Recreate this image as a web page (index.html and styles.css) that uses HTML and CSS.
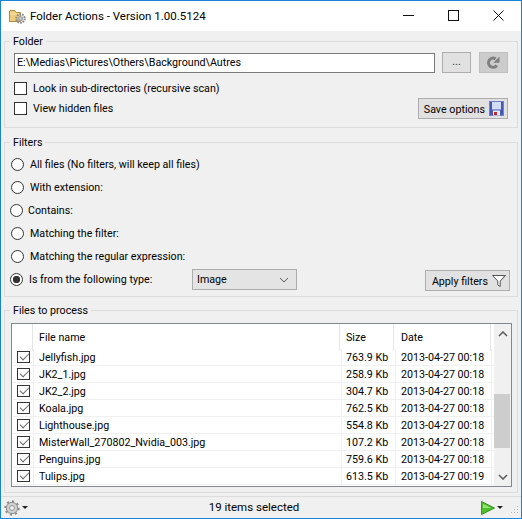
FILE: index.html
```html
<!DOCTYPE html>
<html lang="en">
<head>
    <meta charset="UTF-8">
    <meta name="viewport" content="width=device-width, initial-scale=1.0">
    <title>Folder Actions</title>
    <link rel="stylesheet" href="styles.css">
</head>
<body>
    <div class="window">
        <div class="titlebar">
            <svg class="app-icon" width="17" height="16" viewBox="0 0 17 16">
                <path d="M0.5 3V13.5h11V4.5H7L5.5 2.5H1z" fill="#f0cd7c" stroke="#b08a3c"/>
                <path d="M1.5 6h10" stroke="#fbe9b8"/>
                <circle cx="11.5" cy="10.5" r="4.2" fill="none" stroke="#8a8a8a" stroke-width="2.2" stroke-dasharray="1.6 1"/>
                <circle cx="11.5" cy="10.5" r="2.6" fill="#a5a5a5"/>
                <circle cx="11.5" cy="10.5" r="1" fill="#e0e0e0"/>
            </svg>
            <span class="title">Folder Actions - Version 1.00.5124</span>
            <div class="caption-buttons">
                <svg width="11" height="11" viewBox="0 0 11 11"><path d="M0 5.5h11" stroke="#111"/></svg>
                <svg width="11" height="11" viewBox="0 0 11 11"><rect x="0.5" y="0.5" width="10" height="10" fill="none" stroke="#111"/></svg>
                <svg width="11" height="11" viewBox="0 0 11 11"><path d="M0.5 0.5l10 10M10.5 0.5l-10 10" stroke="#111" fill="none"/></svg>
            </div>
        </div>

        <div class="content">
            <fieldset class="group group-folder">
                <legend>Folder</legend>
                <div class="path-row">
                    <div class="textbox">E:\Medias\Pictures\Others\Background\Autres</div>
                    <button class="btn btn-browse">...</button>
                    <button class="btn btn-refresh" disabled>
                        <svg width="15" height="15" viewBox="0 0 15 15">
                            <path d="M10.8 10.4A4.6 4.6 0 1 1 9.6 3.9" fill="none" stroke="#808080" stroke-width="3"/>
                            <path d="M13.5 1.5v6.2h-6.2z" fill="#808080"/>
                        </svg>
                    </button>
                </div>
                <div class="options-row">
                    <div class="options-checks">
                        <label class="check"><span class="box"></span>Look in sub-directories (recursive scan)</label>
                        <label class="check"><span class="box"></span>View hidden files</label>
                    </div>
                    <button class="btn btn-save"><span class="btn-label">Save options</span>
                        <svg width="15" height="15" viewBox="0 0 15 15">
                            <rect x="0.5" y="0.5" width="14" height="14" fill="#4658b8" stroke="#6f7fd0"/>
                            <rect x="3" y="1" width="9" height="7.5" fill="#d3dcf5"/>
                            <rect x="4" y="9.5" width="7" height="5" fill="#eceef4"/>
                            <rect x="5" y="11" width="3" height="3" fill="#c8242c"/>
                        </svg>
                    </button>
                </div>
            </fieldset>

            <fieldset class="group group-filters">
                <legend>Filters</legend>
                <div class="radio-list">
                    <label class="radio"><span class="dot"></span>All files (No filters, will keep all files)</label>
                    <label class="radio"><span class="dot"></span>With extension:</label>
                    <label class="radio radio-tight"><span class="dot"></span>Contains:</label>
                    <label class="radio"><span class="dot"></span>Matching the filter:</label>
                    <label class="radio"><span class="dot"></span>Matching the regular expression:</label>
                    <div class="type-row">
                        <label class="radio radio-type"><span class="dot checked"></span>Is from the following type:</label>
                        <div class="combo">Image
                            <svg width="10" height="6" viewBox="0 0 10 6"><path d="M1 1l4 4 4-4" fill="none" stroke="#555"/></svg>
                        </div>
                        <button class="btn btn-apply"><span class="btn-label">Apply filters</span>
                            <svg width="14" height="12" viewBox="0 0 14 12">
                                <path d="M0.5 0.5h13L8.2 6v5.5L5.8 10V6z" fill="#fff" stroke="#555"/>
                                <path d="M8.2 6l3.6-5h1.7L8.2 6.5z" fill="#777"/>
                            </svg>
                        </button>
                    </div>
                </div>
            </fieldset>

            <fieldset class="group group-files">
                <legend>Files to process</legend>
                <div class="listview">
                    <div class="list-main">
                        <div class="list-head">
                            <span class="cell-check"></span>
                            <span class="cell-name">File name</span>
                            <span class="cell-size">Size</span>
                            <span class="cell-date">Date</span>
                        </div>
                        <div class="list-row"><span class="cell-check"><span class="tick"></span></span><span class="cell-name">Jellyfish.jpg</span><span class="cell-size">763.9 Kb</span><span class="cell-date">2013-04-27 00:18</span></div>
                        <div class="list-row"><span class="cell-check"><span class="tick"></span></span><span class="cell-name">JK2_1.jpg</span><span class="cell-size">258.9 Kb</span><span class="cell-date">2013-04-27 00:18</span></div>
                        <div class="list-row"><span class="cell-check"><span class="tick"></span></span><span class="cell-name">JK2_2.jpg</span><span class="cell-size">304.7 Kb</span><span class="cell-date">2013-04-27 00:18</span></div>
                        <div class="list-row"><span class="cell-check"><span class="tick"></span></span><span class="cell-name">Koala.jpg</span><span class="cell-size">762.5 Kb</span><span class="cell-date">2013-04-27 00:18</span></div>
                        <div class="list-row"><span class="cell-check"><span class="tick"></span></span><span class="cell-name">Lighthouse.jpg</span><span class="cell-size">554.8 Kb</span><span class="cell-date">2013-04-27 00:18</span></div>
                        <div class="list-row"><span class="cell-check"><span class="tick"></span></span><span class="cell-name">MisterWall_270802_Nvidia_003.jpg</span><span class="cell-size">107.2 Kb</span><span class="cell-date">2013-04-27 00:18</span></div>
                        <div class="list-row"><span class="cell-check"><span class="tick"></span></span><span class="cell-name">Penguins.jpg</span><span class="cell-size">759.6 Kb</span><span class="cell-date">2013-04-27 00:18</span></div>
                        <div class="list-row"><span class="cell-check"><span class="tick"></span></span><span class="cell-name">Tulips.jpg</span><span class="cell-size">613.5 Kb</span><span class="cell-date">2013-04-27 00:19</span></div>
                    </div>
                    <div class="scrollbar">
                        <svg width="10" height="6" viewBox="0 0 10 6"><path d="M1 5l4-4 4 4" fill="none" stroke="#606060" stroke-width="1.6"/></svg>
                        <div class="scroll-track"><div class="scroll-thumb"></div></div>
                        <svg width="10" height="6" viewBox="0 0 10 6"><path d="M1 1l4 4 4-4" fill="none" stroke="#606060" stroke-width="1.6"/></svg>
                    </div>
                </div>
            </fieldset>
        </div>

        <div class="statusbar">
            <div class="status-left">
                <svg width="16" height="16" viewBox="0 0 17 17">
                    <circle cx="8.5" cy="8.5" r="6" fill="#d2d2d2" stroke="#858585" stroke-width="1"/>
                    <circle cx="8.5" cy="8.5" r="7.2" fill="none" stroke="#8e8e8e" stroke-width="2" stroke-dasharray="2.4 3.2"/>
                    <circle cx="8.5" cy="8.5" r="2.6" fill="#f0f0f0" stroke="#8e8e8e"/>
                </svg>
                <span class="caret"></span>
            </div>
            <span class="status-text">19 items selected</span>
            <div class="status-right">
                <svg class="play" width="14" height="14" viewBox="0 0 14 14">
                    <path d="M0.5 0.5L13.5 7 0.5 13.5z" fill="#4fbf2a" stroke="#3a8f28"/>
                    <path d="M2 3L10 7H2z" fill="#9ae27a"/>
                </svg>
                <span class="caret"></span>
                <svg class="grip" width="9" height="9" viewBox="0 0 9 9">
                    <path d="M7 1h1v1H7zM4 4h1v1H4zM7 4h1v1H7zM1 7h1v1H1zM4 7h1v1H4zM7 7h1v1H7z" fill="#b5b5b5"/>
                </svg>
            </div>
        </div>
    </div>
</body>
</html>
```

FILE: styles.css
```css
* {
    box-sizing: border-box;
}
body {
    margin: 0;
    font-family: Roboto, "Noto Sans", sans-serif;
    font-size: 10.7px;
    color: #000;
    background-color: #f0f0f0;
}
.window {
    width: 522px;
    height: 519px;
    display: flex;
    flex-direction: column;
    border: 1px solid #1883d7;
    background-color: #f0f0f0;
    overflow: hidden;
}

/* title bar */
.titlebar {
    height: 30px;
    flex: none;
    display: flex;
    align-items: center;
    background-color: #fff;
    padding-left: 8px;
}
.app-icon {
    margin-right: 4px;
}
.title {
    font-size: 11.5px;
}
.caption-buttons {
    margin-left: auto;
    margin-bottom: 1px;
    display: flex;
    gap: 34px;
    padding-right: 17px;
}

/* groups */
.content {
    flex: 1;
    padding: 2px 3px 0;
}
.group {
    margin: 0;
    padding: 0 9px;
    border: 1px solid #dcdcdc;
    min-width: 0;
}
.group legend {
    margin-left: -4px;
    padding: 0 3px;
    line-height: 18px;
    height: 16px;
}
.group-folder {
    height: 95px;
}
.group-filters {
    height: 163px;
    margin-top: 6px;
}
.group-files {
    height: 191px;
    margin-top: 5px;
    padding: 0 5px 0 6px;
}
.group-files legend {
    margin-left: -1px;
}

.btn {
    height: 21px;
    padding: 0;
    font: inherit;
    color: #000;
    background-color: #e1e1e1;
    border: 1px solid #adadad;
    display: inline-flex;
    align-items: center;
    justify-content: center;
}
.btn-label {
    padding-top: 2px;
}

/* folder */
.path-row {
    display: flex;
    align-items: center;
    margin-top: 3px;
}
.textbox {
    width: 421px;
    height: 20px;
    line-height: 18px;
    padding-left: 2px;
    background-color: #fff;
    border: 1px solid #7a7a7a;
}
.btn-browse {
    width: 29px;
    margin-left: 7px;
    color: #333;
    padding-bottom: 3px;
}
.btn-refresh {
    width: 29px;
    margin-left: 8px;
    background-color: #cccccc;
    border-color: #bfbfbf;
}
.options-row {
    display: flex;
    justify-content: space-between;
    align-items: flex-start;
    padding-top: 8px;
}
.options-checks {
    display: flex;
    flex-direction: column;
    gap: 7px;
    padding-top: 1px;
}
.check {
    display: flex;
    align-items: center;
    height: 13px;
}
.box {
    width: 13px;
    height: 13px;
    margin-right: 6px;
    background-color: #fff;
    border: 1px solid #333;
}
.btn-save {
    width: 90px;
    margin-top: 17px;
    gap: 4px;
    justify-content: flex-end;
    padding-right: 3px;
}

/* filters */
.radio-list {
    display: flex;
    flex-direction: column;
    padding-top: 3px;
}
.radio {
    display: flex;
    align-items: center;
    height: 23px;
    margin-left: -3px;
}
.radio-tight {
    margin-left: -4px;
}
.radio-tight .dot {
    margin-right: 5px;
}
.dot {
    width: 13px;
    height: 13px;
    margin-right: 6px;
    border: 1px solid #333;
    border-radius: 50%;
    background-color: #fff;
}
.dot.checked {
    background: radial-gradient(circle, #333 0, #333 3.4px, #fff 4px);
}
.type-row {
    display: flex;
    align-items: center;
}
.type-row > * {
    flex: none;
}
.radio-type {
    margin-left: -4px;
    width: 182px;
}
.combo {
    width: 105px;
    height: 21px;
    padding: 0 7px 0 4px;
    display: flex;
    align-items: center;
    justify-content: space-between;
    background-color: #e4e4e4;
    border: 1px solid #adadad;
}
.btn-apply {
    width: 85px;
    margin-left: 128px;
    margin-top: 2px;
    gap: 4px;
    justify-content: flex-end;
    padding-right: 3px;
}

/* file list */
.listview {
    display: flex;
    height: 164px;
    margin-top: 5px;
    background-color: #fff;
    border: 1px solid #828790;
}
.list-main {
    flex: 1;
    min-width: 0;
    padding-left: 1px;
}
.list-head,
.list-row {
    display: grid;
    align-items: stretch;
}
.list-head {
    grid-template-columns: 20px 307px 54px 97px;
    height: 25px;
    line-height: 27px;
}
.list-head > span {
    border-right: 1px solid #e5e5e5;
}
.list-head .cell-name {
    padding-left: 6px;
}
.list-head .cell-size {
    padding-left: 6px;
}
.list-head .cell-date {
    padding-left: 7px;
}
.list-row {
    grid-template-columns: 21px 308px 54px 96px;
    height: 17px;
    line-height: 18px;
    border-bottom: 1px solid #f0f0f0;
}
.list-row > span {
    border-right: 1px solid #f0f0f0;
}
.cell-name {
    padding-left: 5px;
    white-space: nowrap;
}
.cell-size {
    padding-left: 4px;
    white-space: nowrap;
}
.cell-date {
    padding-left: 5px;
    white-space: nowrap;
}
.cell-check {
    display: flex;
    align-items: flex-start;
    padding-left: 4px;
    padding-top: 2px;
}
.tick {
    width: 13px;
    height: 12px;
    border: 1px solid #333;
    position: relative;
}
.tick::after {
    content: "";
    position: absolute;
    left: 2px;
    top: 1px;
    width: 8px;
    height: 4px;
    border-left: 1px solid #666;
    border-bottom: 1px solid #666;
    transform: rotate(-45deg);
}
.scrollbar {
    width: 17px;
    flex: none;
    display: flex;
    flex-direction: column;
    align-items: center;
    justify-content: space-between;
    padding: 7px 0 6px;
    background-color: #f0f0f0;
}
.scroll-track {
    flex: 1;
    width: 100%;
    padding-top: 57px;
    padding-bottom: 26px;
    padding-right: 1px;
}
.scroll-thumb {
    height: 100%;
    background-color: #cdcdcd;
}

/* status bar */
.statusbar {
    height: 22px;
    flex: none;
    display: flex;
    align-items: center;
    justify-content: space-between;
    border-top: 1px solid #dcdcdc;
    padding: 0 2px 0 3px;
}
.status-left,
.status-right {
    display: flex;
    align-items: center;
}
.status-text {
    font-size: 11.5px;
    margin-right: 1px;
    padding-bottom: 1px;
}
.caret {
    width: 0;
    height: 0;
    margin-left: 2px;
    border-left: 3px solid transparent;
    border-right: 3px solid transparent;
    border-top: 3px solid #222;
}
.play {
    margin-top: 1px;
}
.grip {
    margin-left: 7px;
    margin-top: 4px;
}
```
